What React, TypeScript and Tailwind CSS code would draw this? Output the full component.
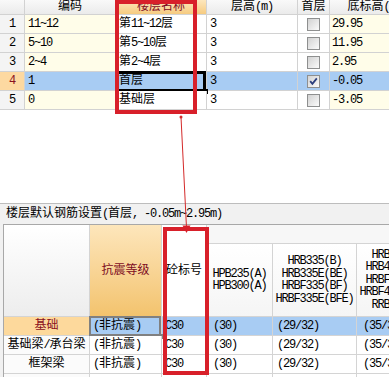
import React from "react";

function T({ s }: { s: string }) {
  const parts = s.split(/([\x00-\x7f]+)/).filter(Boolean);
  return (
    <>
      {parts.map((p, i) =>
        /^[\x00-\x7f]+$/.test(p) ? (
          <span key={i} className="tracking-[-1.2px]">
            {p}
          </span>
        ) : (
          <span key={i}>{p}</span>
        )
      )}
    </>
  );
}

function Check({ checked }: { checked: boolean }) {
  return (
    <div className="w-[13px] h-[13px] border border-[#8e8f8f] bg-gradient-to-br from-[#d2d2d2] to-[#fbfbfb] flex items-center justify-center">
      {checked && (
        <svg width="9" height="9" viewBox="0 0 9 9">
          <path d="M1.2 4.2 L3.4 6.8 L7.8 1.4" fill="none" stroke="#2c3f7e" strokeWidth="1.8" />
        </svg>
      )}
    </div>
  );
}

const rows = [
  { n: "1", code: "11~12", name: "第11~12层", h: "3", first: false, base: "29.95" },
  { n: "2", code: "5~10", name: "第5~10层", h: "3", first: false, base: "11.95" },
  { n: "3", code: "2~4", name: "第2~4层", h: "3", first: false, base: "2.95" },
  { n: "4", code: "1", name: "首层", h: "3", first: true, base: "-0.05" },
  { n: "5", code: "0", name: "基础层", h: "3", first: false, base: "-3.05" },
];

const bottomRows = [
  { label: "基础", sel: true },
  { label: "基础梁/承台梁", sel: false },
  { label: "框架梁", sel: false },
];

export default function App() {
  const hd =
    "h-[15px] border-r border-b border-[#d2d2d2] flex items-center justify-center bg-gradient-to-b from-[#f9f9f9] to-[#ebebeb] overflow-hidden whitespace-nowrap";
  const cell = "h-[19px] border-r border-b border-[#d2d2d2] flex items-center overflow-hidden whitespace-nowrap";
  const bcell = "border-r border-b border-[#d4d4d4] flex items-center overflow-hidden whitespace-nowrap";
  return (
    <div className="relative w-[389px] h-[377px] overflow-hidden bg-white text-black text-[12px] leading-none font-['Liberation_Mono','Noto_Sans_CJK_SC',monospace]">
      {/* top table */}
      <div className="grid grid-cols-[25px_91px_91px_91px_32px_90px] w-[420px]">
        <div className={hd}></div>
        <div className={hd}>
          <T s="编码" />
        </div>
        <div className={`${hd} !from-[#fde7bd] !to-[#f6cb80] text-[#7d0b1e]`}>
          <T s="楼层名称" />
        </div>
        <div className={hd}>
          <T s="层高(m)" />
        </div>
        <div className={hd}>
          <T s="首层" />
        </div>
        <div className={hd}>
          <T s="底标高(m)" />
        </div>
        {rows.map((r) => {
          const sel = r.first;
          return (
            <React.Fragment key={r.n}>
              <div
                className={`${cell} justify-center ${sel ? "bg-[#fdd9a1] text-[#8a1020]" : "bg-[#f4f4f4]"}`}
              >
                <T s={r.n} />
              </div>
              <div className={`${cell} pl-[3px] ${sel ? "bg-[#a8ccf3]" : "bg-[#fffde9]"}`}>
                <T s={r.code} />
              </div>
              <div className={`${cell} pl-[3px] relative !overflow-visible ${sel ? "bg-[#a8ccf3]" : "bg-white"}`}>
                <T s={r.name} />
                {sel && (
                  <div className="absolute -left-[1px] -top-[1px] -right-[0px] -bottom-[2px] border-[3px] border-black">
                    <div className="absolute -right-[5px] -bottom-[5px] w-[5px] h-[5px] bg-black" />
                  </div>
                )}
              </div>
              <div className={`${cell} pl-[3px] ${sel ? "bg-[#a8ccf3]" : "bg-white"}`}>
                <T s={r.h} />
              </div>
              <div className={`${cell} justify-center ${sel ? "bg-[#a8ccf3]" : "bg-white"}`}>
                <Check checked={r.first} />
              </div>
              <div className={`${cell} pl-[2px] ${sel ? "bg-[#a8ccf3]" : "bg-[#fffde9]"}`}>
                <T s={r.base} />
              </div>
            </React.Fragment>
          );
        })}
      </div>

      <div className="h-[93px]" />

      {/* title bar */}
      <div className="h-[21px] border-t border-[#bdbdbd] bg-[#f1f1f1] flex items-center pl-[6px] whitespace-nowrap">
        <T s="楼层默认钢筋设置(首层, -0.05m~2.95m)" />
      </div>

      {/* bottom panel */}
      <div className="pl-[3px] bg-[#f1f1f1]">
        <div className="border-l border-t border-[#a8a8a8] bg-white w-[460px]">
          <div className="grid grid-cols-[86px_72px_45px_66px_84px_84px] grid-rows-[19px_73px_19px_19px_19px_19px]">
            <div className={`${bcell} row-span-2 bg-gradient-to-b from-white to-[#ededed]`}></div>
            <div
              className={`${bcell} row-span-2 justify-center bg-gradient-to-b from-[#fde6bb] to-[#f3c36d] text-[#7d0b1e]`}
            >
              <T s="抗震等级" />
            </div>
            <div className={`${bcell} row-span-2 justify-center bg-white`}>
              <T s="砼标号" />
            </div>
            <div className={`${bcell} col-span-3 bg-[#f7f7f7]`}></div>
            <div className={`${bcell} flex-col justify-center leading-[12.5px] bg-gradient-to-b from-white to-[#f5f5f5]`}>
              <span><T s="HPB235(A)" /></span>
              <span><T s="HPB300(A)" /></span>
            </div>
            <div className={`${bcell} flex-col justify-center leading-[12.5px] bg-gradient-to-b from-white to-[#f5f5f5]`}>
              <span><T s="HRB335(B)" /></span>
              <span><T s="HRB335E(BE)" /></span>
              <span><T s="HRBF335(BF)" /></span>
              <span><T s="HRBF335E(BFE)" /></span>
            </div>
            <div className={`${bcell} flex-col justify-center leading-[12.5px] bg-gradient-to-b from-white to-[#f5f5f5]`}>
              <span><T s="HRB400(C)" /></span>
              <span><T s="HRB400E(CE)" /></span>
              <span><T s="HRBF400(CF)" /></span>
              <span><T s="HRBF400E(CFE)" /></span>
              <span><T s="RRB400(D)" /></span>
            </div>

            {bottomRows.map((r) => {
              const blue = r.sel ? "bg-[#a8ccf3]" : "bg-white";
              return (
                <React.Fragment key={r.label}>
                  <div
                    className={`${bcell} justify-center ${r.sel ? "bg-[#fdd99c] text-[#8a1020]" : "bg-[#fbfbfb]"}`}
                  >
                    <T s={r.label} />
                  </div>
                  <div className={`${bcell} pl-[3px] relative !overflow-visible ${blue}`}>
                    <T s="(非抗震)" />
                    {r.sel && (
                      <div className="absolute -left-[1px] -top-[1px] right-0 -bottom-[1px] border-2 border-[#808080]">
                        <div className="absolute -right-[5px] -bottom-[5px] w-[5px] h-[5px] bg-[#808080]" />
                      </div>
                    )}
                  </div>
                  <div className={`${bcell} pl-[3px] ${blue}`}>
                    <T s="C30" />
                  </div>
                  <div className={`${bcell} pl-[6px] ${blue}`}>
                    <T s="(30)" />
                  </div>
                  <div className={`${bcell} pl-[4px] ${blue}`}>
                    <T s="(29/32)" />
                  </div>
                  <div className={`${bcell} pl-[6px] ${blue}`}>
                    <T s="(35/32)" />
                  </div>
                </React.Fragment>
              );
            })}
            <div className={`${bcell} bg-[#fbfbfb]`} />
            <div className={`${bcell} bg-white`} />
            <div className={`${bcell} bg-white`} />
            <div className={`${bcell} bg-white`} />
            <div className={`${bcell} bg-white`} />
            <div className={`${bcell} bg-white`} />
          </div>
        </div>
      </div>

      {/* red annotation boxes */}
      <div className="absolute left-[115px] top-0 w-[82px] h-[114px] border-4 border-[#d8202a]" />
      <div className="absolute left-[163px] top-[227px] w-[46px] h-[148px] border-4 border-[#d8202a]" />

      {/* arrow */}
      <svg className="absolute left-0 top-0 pointer-events-none" width="389" height="377" viewBox="0 0 389 377">
        <line x1="181" y1="117" x2="186.5" y2="228" stroke="#d42a2a" strokeWidth="1" />
        <circle cx="181" cy="117" r="1.5" fill="#d42a2a" />
        <polygon points="182.5,225.5 190.5,225.5 186.5,233" fill="#d8202a" />
      </svg>
    </div>
  );
}
